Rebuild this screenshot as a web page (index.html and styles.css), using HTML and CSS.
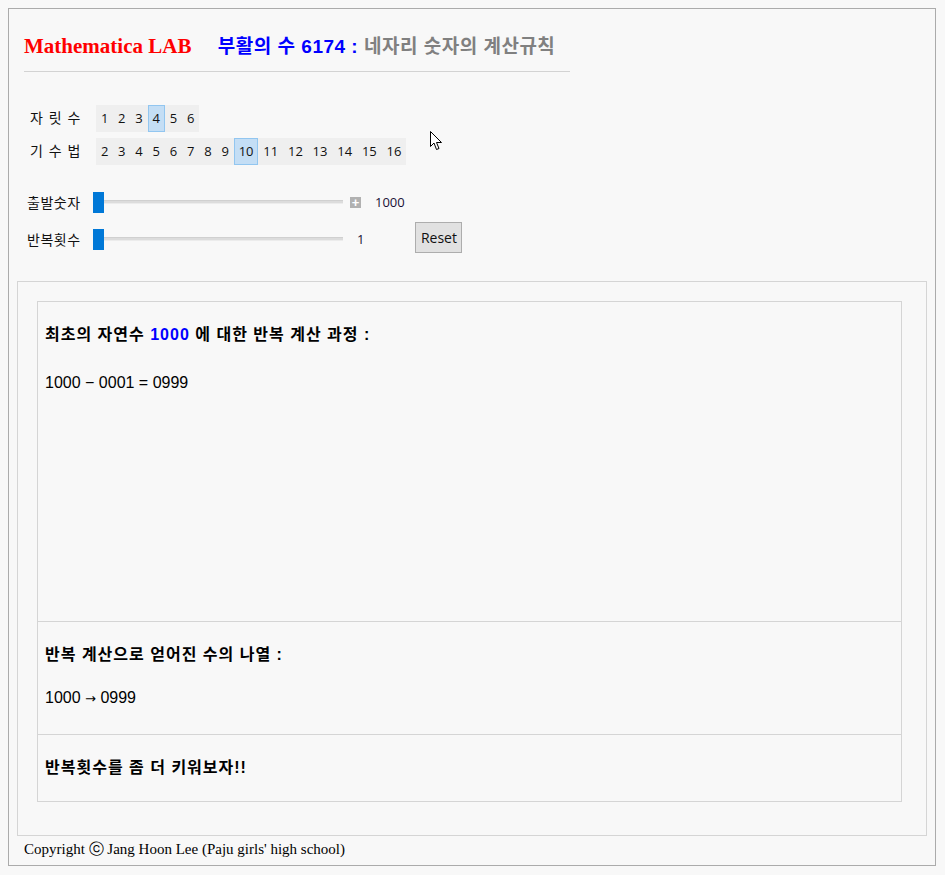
FILE: index.html
```html
<!DOCTYPE html>
<html lang="ko">
<head>
  <meta charset="UTF-8" />
  <title>부활의 수 6174 - Mathematica LAB</title>
  <link rel="stylesheet" href="styles.css">
</head>
<body>
  <div class="frame">
    <div class="head">
      <span class="brand">Mathematica LAB</span>
      <span class="title"><span class="blue">부활의 수 6174 :</span> 네자리 숫자의 계산규칙</span>
    </div>

    <div class="controls">
      <div class="setter">
        <span class="lbl">자 릿 수</span>
        <div class="opts">
          <span class="opt">1</span><span class="opt">2</span><span class="opt">3</span><span class="opt on">4</span><span class="opt">5</span><span class="opt">6</span>
        </div>
      </div>
      <div class="setter">
        <span class="lbl">기 수 법</span>
        <div class="opts">
          <span class="opt">2</span><span class="opt">3</span><span class="opt">4</span><span class="opt">5</span><span class="opt">6</span><span class="opt">7</span><span class="opt">8</span><span class="opt">9</span><span class="opt on">10</span><span class="opt">11</span><span class="opt">12</span><span class="opt">13</span><span class="opt">14</span><span class="opt">15</span><span class="opt">16</span>
        </div>
      </div>

      <div class="sliders">
        <div class="slider-row">
          <span class="slbl">출발숫자</span>
          <div class="slider"><span class="thumb"></span><span class="track"></span></div>
          <span class="plus">+</span>
          <span class="val">1000</span>
        </div>
        <div class="slider-row">
          <span class="slbl">반복횟수</span>
          <div class="slider"><span class="thumb"></span><span class="track"></span></div>
          <span class="val one">1</span>
          <button class="reset">Reset</button>
        </div>
      </div>
    </div>

    <div class="panel">
      <div class="box">
        <div class="sec first">
          <div class="q">최초의 자연수 <span class="blue">1000</span> 에 대한 반복 계산 과정 :</div>
          <div class="calc">1000 − 0001 = 0999</div>
        </div>
        <div class="sec">
          <div class="q">반복 계산으로 얻어진 수의 나열 :</div>
          <div class="calc seq">1000 <span class="arrow">→</span> 0999</div>
        </div>
        <div class="sec">
          <div class="q">반복횟수를 좀 더 키워보자!!</div>
        </div>
      </div>
    </div>

    <div class="copy">Copyright ⓒ Jang Hoon Lee (Paju girls' high school)</div>

    <svg class="cursor" width="13" height="21" viewBox="0 0 13 21">
      <path d="M0.5 0.5 L0.5 15.5 L4 12 L6.5 18.5 L9 17.5 L6.5 11.5 L11.5 11.5 Z" fill="#fff" stroke="#000" stroke-width="1"/>
    </svg>
  </div>
</body>
</html>
```

FILE: styles.css
```css
body {
  margin: 8px;
  background: #f8f8f8;
  font-family: "Liberation Sans", "Noto Sans CJK KR", sans-serif;
  color: #000;
}
.frame {
  position: relative;
  border: 1px solid #ababab;
  box-sizing: border-box;
  width: 928px;
  height: 858px;
}
.head {
  margin: 25px 0 0 15px;
  width: 546px;
  height: 37px;
  line-height: 24px;
  border-bottom: 1px solid #d3d3d3;
}
.brand {
  font-family: "Liberation Serif", serif;
  font-weight: bold;
  font-size: 21px;
  color: #f00;
}
.title {
  margin-left: 22px;
  font-family: "Liberation Sans", "Noto Sans CJK KR", sans-serif;
  font-weight: bold;
  font-size: 19px;
  letter-spacing: 0.5px;
  color: #808080;
}
.blue {
  color: #0000ff;
}
.controls {
  padding: 33px 0 0 18px;
  height: 209px;
  box-sizing: border-box;
}
.setter {
  display: flex;
  align-items: center;
  margin-bottom: 6px;
}
.lbl {
  width: 69px;
  padding-left: 3px;
  box-sizing: border-box;
  font-family: "Noto Sans CJK KR", sans-serif;
  font-size: 14px;
  letter-spacing: 1px;
  color: #111;
  margin-top: -3px;
}
.opts {
  display: flex;
  background: #efefef;
  height: 27px;
}
.opt {
  padding: 0 3.9px;
  line-height: 25px;
  border: 1px solid transparent;
  font-family: "Open Sans", sans-serif;
  font-size: 13px;
  color: #111;
}
.opt.on {
  background: #c4def5;
  border-color: #92c6f0;
}
.sliders {
  margin-top: 26px;
}
.slider-row {
  display: flex;
  align-items: center;
  height: 22px;
  margin-bottom: 15px;
}
.slbl {
  width: 66px;
  font-family: "Noto Sans CJK KR", sans-serif;
  font-size: 14px;
  letter-spacing: 0.5px;
  color: #111;
}
.slider {
  display: flex;
  align-items: center;
  width: 250px;
}
.thumb {
  width: 11px;
  height: 21px;
  background: #0078d7;
}
.track {
  flex: 1;
  height: 2px;
  background: #dcdcdc;
  border-top: 1px solid #d0d0d0;
  border-bottom: 1px solid #ececec;
}
.plus {
  margin-left: 7px;
  width: 11px;
  height: 11px;
  background: #b1b1b1;
  color: #fff;
  font-weight: bold;
  font-size: 13px;
  line-height: 11px;
  text-align: center;
}
.val {
  margin-left: 14px;
  font-family: "Open Sans", sans-serif;
  font-size: 13px;
  color: #1a1036;
}
.val.one {
  margin-left: 14px;
}
.reset {
  margin-left: 51px;
  width: 47px;
  height: 31px;
  padding: 0;
  margin-top: -3px;
  background: #e1e1e1;
  border: 1px solid #adadad;
  font-family: "Open Sans", sans-serif;
  font-size: 14px;
  color: #111;
}
.panel {
  margin: 0 8px;
  border: 1px solid #d5d5d5;
  padding: 19px 24px 33px 19px;
}
.box {
  border: 1px solid #d5d5d5;
}
.sec {
  padding: 21px 7px;
  border-top: 1px solid #d5d5d5;
}
.sec.first {
  border-top: none;
  height: 277px;
}
.q {
  font-family: "Liberation Sans", "Noto Sans CJK KR", sans-serif;
  font-weight: bold;
  font-size: 16px;
  letter-spacing: 1px;
  line-height: 24px;
}
.calc {
  margin-top: 24px;
  font-size: 16px;
  line-height: 24px;
}
.calc.seq {
  margin-top: 19px;
  margin-bottom: 2px;
}
.arrow {
  font-family: "DejaVu Sans", sans-serif;
  font-size: 13px;
}
.copy {
  margin: 3px 0 0 15px;
  font-family: "Liberation Serif", serif;
  font-size: 15px;
  line-height: 20px;
}
.cursor {
  position: absolute;
  left: 421px;
  top: 122px;
}
```
